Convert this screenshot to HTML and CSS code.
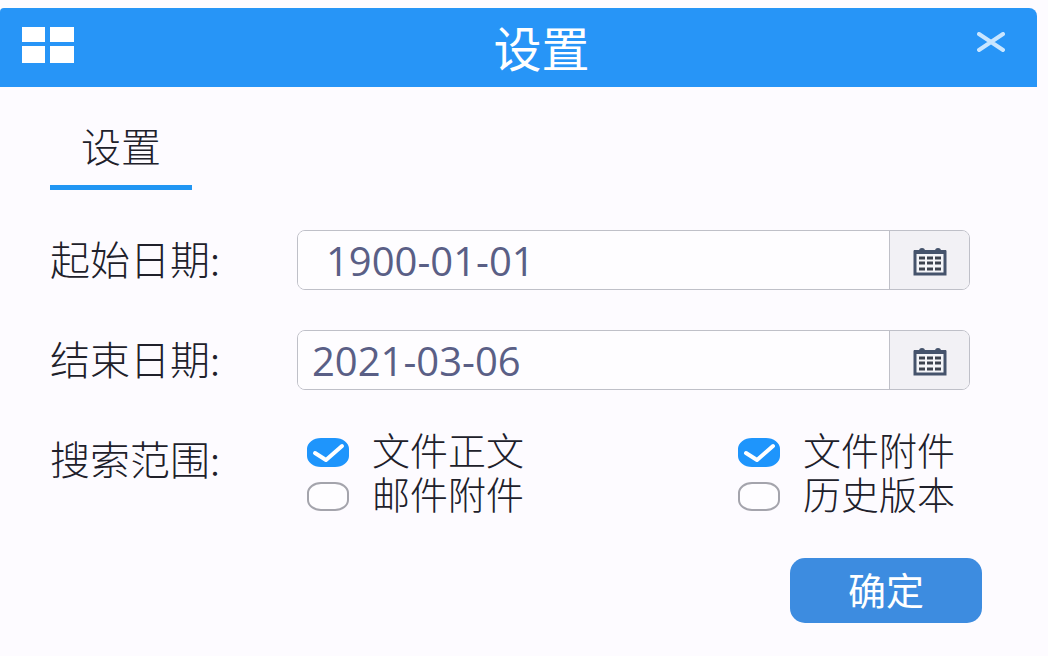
FILE: index.html
```
<!DOCTYPE html>
<html lang="zh-CN">
<head>
    <meta charset="UTF-8">
    <meta name="viewport" content="width=device-width, initial-scale=1.0">
    <title>设置</title>
    <link rel="stylesheet" href="styles.css">
</head>
<body>
    <header class="titlebar">
        <svg class="logo" viewBox="0 0 52 36" aria-hidden="true">
            <path d="M0 0h23v15H0zM28 0h24v15H28zM0 19h23v17H0zM28 19h24v17H28z" fill="#fff"/>
        </svg>
        <h1>设置</h1>
        <button class="close" type="button" aria-label="关闭">
            <svg viewBox="0 0 28 20" width="28" height="20">
                <path d="M2 2L26 18M26 2L2 18" stroke="#c9e6ff" stroke-width="4" stroke-linecap="round"/>
            </svg>
        </button>
    </header>
    <main>
        <nav class="tabs">
            <a href="#settings" class="tab">设置</a>
        </nav>
        <form id="settings">
            <div class="row">
                <label class="name" for="start">起始日期:</label>
                <div class="date">
                    <input class="indent" type="text" id="start" value="1900-01-01">
                    <button type="button" aria-label="选择起始日期">
                        <svg viewBox="0 0 34 28" width="34" height="28">
                            <path d="M6 3Q6 0 9 0Q12 0 12 3ZM22 3Q22 0 25 0Q28 0 28 3Z" fill="#45536b"/>
                            <path d="M2 4H32V26H2Z" fill="#f4f5f8" stroke="#45536b" stroke-width="3"/>
                            <path d="M1 2H33V6H1Z" fill="#45536b"/>
                            <path d="M6 10H28M6 15H28M6 21H28" stroke="#3c424e" stroke-width="3" stroke-dasharray="6 2"/>
                        </svg>
                    </button>
                </div>
            </div>
            <div class="row">
                <label class="name" for="end">结束日期:</label>
                <div class="date">
                    <input type="text" id="end" value="2021-03-06">
                    <button type="button" aria-label="选择结束日期">
                        <svg viewBox="0 0 34 28" width="34" height="28">
                            <path d="M6 3Q6 0 9 0Q12 0 12 3ZM22 3Q22 0 25 0Q28 0 28 3Z" fill="#45536b"/>
                            <path d="M2 4H32V26H2Z" fill="#f4f5f8" stroke="#45536b" stroke-width="3"/>
                            <path d="M1 2H33V6H1Z" fill="#45536b"/>
                            <path d="M6 10H28M6 15H28M6 21H28" stroke="#3c424e" stroke-width="3" stroke-dasharray="6 2"/>
                        </svg>
                    </button>
                </div>
            </div>
            <div class="row" role="group" aria-labelledby="scope">
                <span class="name" id="scope">搜索范围:</span>
                <div class="options">
                    <label><input type="checkbox" checked><span>文件正文</span></label>
                    <label><input type="checkbox" checked><span>文件附件</span></label>
                    <label><input type="checkbox"><span>邮件附件</span></label>
                    <label><input type="checkbox"><span>历史版本</span></label>
                </div>
            </div>
            <div class="actions">
                <button class="ok" type="submit">确定</button>
            </div>
        </form>
    </main>
</body>
</html>
```
FILE: styles.css
```
*{
    box-sizing: border-box;
    margin: 0;
    padding: 0;
}
body{
    background-color: #fdfbff;
    color: #20202a;
    font-family: "Noto Sans CJK SC", sans-serif;
    font-size: 40px;
    font-weight: 300;
    line-height: 44px;
}
button, input{
    font-family: inherit;
    border: none;
}
.titlebar{
    display: grid;
    grid-template-columns: 52px 1fr 32px;
    align-items: center;
    height: 79px;
    margin: 8px 11px 0 0;
    padding: 0 30px 0 22px;
    background-color: #2795f7;
    border-radius: 4px 8px 0 0;
    color: white;
}
.logo{
    width: 52px;
    height: 36px;
    margin-bottom: 6px;
}
h1{
    padding: 0 0 4px 34px;
    font-size: 48px;
    font-weight: 400;
    line-height: 60px;
    text-align: center;
}
.close{
    display: flex;
    justify-content: center;
    margin-bottom: 12px;
    background: none;
    cursor: pointer;
}
main{
    padding: 36px 78px 32px 50px;
}
.tabs{
    display: flex;
    margin-bottom: 40px;
}
.tab{
    width: 142px;
    padding-bottom: 18px;
    border-bottom: 5px solid #2196f3;
    color: inherit;
    text-align: center;
    text-decoration: none;
}
.row{
    display: grid;
    grid-template-columns: 247px 1fr;
    align-items: start;
    margin-bottom: 40px;
}
.name{
    padding-top: 6px;
}
.date{
    display: flex;
    height: 60px;
    border: 1px solid #bfc0c8;
    border-radius: 8px;
    overflow: hidden;
}
.date input{
    flex: 1;
    min-width: 0;
    padding: 0 14px;
    background-color: #fefdff;
    color: #5a5f86;
    font-family: "Open Sans", sans-serif;
    font-size: 40px;
}
.date .indent{
    padding-left: 28px;
}
.date button{
    display: flex;
    align-items: center;
    justify-content: center;
    width: 80px;
    padding-top: 4px;
    border-left: 1px solid #bfc0c8;
    background-color: #f2f1f5;
    cursor: pointer;
}
.options{
    display: grid;
    grid-template-columns: 65% 35%;
    padding-left: 10px;
    font-size: 38px;
}
.options label{
    display: flex;
    align-items: center;
    gap: 23px;
    height: 44px;
    white-space: nowrap;
}
.options span{
    padding-bottom: 6px;
}
.options input{
    appearance: none;
    flex: none;
    width: 42px;
    height: 29px;
    border: 2px solid #a4a4ac;
    border-radius: 14px / 11px;
    background-color: #fefdff;
}
.options input:checked{
    border-color: #1e95fc;
    background: #1e95fc url("data:image/svg+xml,%3Csvg xmlns='http://www.w3.org/2000/svg' viewBox='0 0 38 25'%3E%3Cpath d='M6 13L17 20L33 6' fill='none' stroke='white' stroke-width='4' stroke-linecap='round' stroke-linejoin='round'/%3E%3C/svg%3E") center / 100% no-repeat;
}
.actions{
    display: flex;
    justify-content: flex-end;
    margin-right: -12px;
}
.ok{
    width: 192px;
    height: 65px;
    padding-bottom: 4px;
    border-radius: 15px;
    background-color: #3d8ce0;
    color: white;
    font-size: 38px;
    font-weight: 400;
    cursor: pointer;
}
```
